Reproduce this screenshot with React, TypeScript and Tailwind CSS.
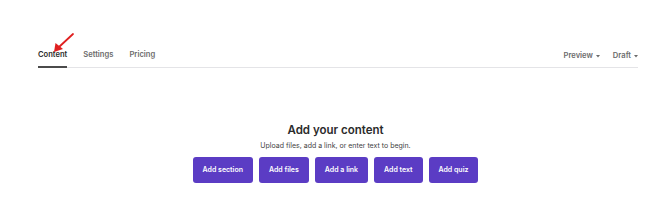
const tabs = ["Content", "Settings", "Pricing"];
const actions = ["Add section", "Add files", "Add a link", "Add text", "Add quiz"];

export default function App() {
  return (
    <div className="w-[671px] h-[208px] bg-white font-['Inter',sans-serif] text-[#2d2d2d]">
      <div className="pt-[49px] pl-[38px] pr-[33px]">
        <div className="flex items-end justify-between border-b border-[#e4e4e7]">
          <div className="flex gap-[16px]">
            {tabs.map((t, i) => (
              <div
                key={t}
                className={`relative pb-[5px] text-[7.6px] font-semibold leading-[12px] ${
                  i === 0 ? "text-[#2b2b2b] border-b-2 border-[#4b4b4b] -mb-px" : "text-[#6b6b6b]"
                }`}
              >
                {t}
                {i === 0 && (
                  <svg
                    className="absolute left-[15px] -top-[16px]"
                    width="22"
                    height="20"
                    viewBox="0 0 22 20"
                  >
                    <line x1="20" y1="1" x2="6" y2="14" stroke="#e02020" strokeWidth="1.8" strokeLinecap="round" />
                    <polygon points="1,19 2.5,10 10,16" fill="#e02020" />
                  </svg>
                )}
              </div>
            ))}
          </div>
          <div className="flex gap-[13px] pb-[5px]">
            {["Preview", "Draft"].map((t) => (
              <div key={t} className="flex items-center gap-[3px] text-[7.6px] font-semibold leading-[12px] text-[#6b6b6b]">
                {t}
                <svg width="4" height="3" viewBox="0 0 4 3">
                  <polygon points="0,0 4,0 2,2.5" fill="#6b6b6b" />
                </svg>
              </div>
            ))}
          </div>
        </div>
      </div>
      <div className="flex flex-col items-center pt-[54px]">
        <h2 className="text-[11.5px] font-semibold leading-[16px] text-[#2b2b2b]">Add your content</h2>
        <p className="mt-[3px] text-[7px] leading-[10px] text-[#3f3f3f]">
          Upload files, add a link, or enter text to begin.
        </p>
        <div className="mt-[6px] flex gap-[6px]">
          {actions.map((a) => (
            <button
              key={a}
              className="h-[26px] px-[10px] rounded-[3px] bg-[#5b3cc4] text-white text-[7px] font-semibold"
            >
              {a}
            </button>
          ))}
        </div>
      </div>
    </div>
  );
}
